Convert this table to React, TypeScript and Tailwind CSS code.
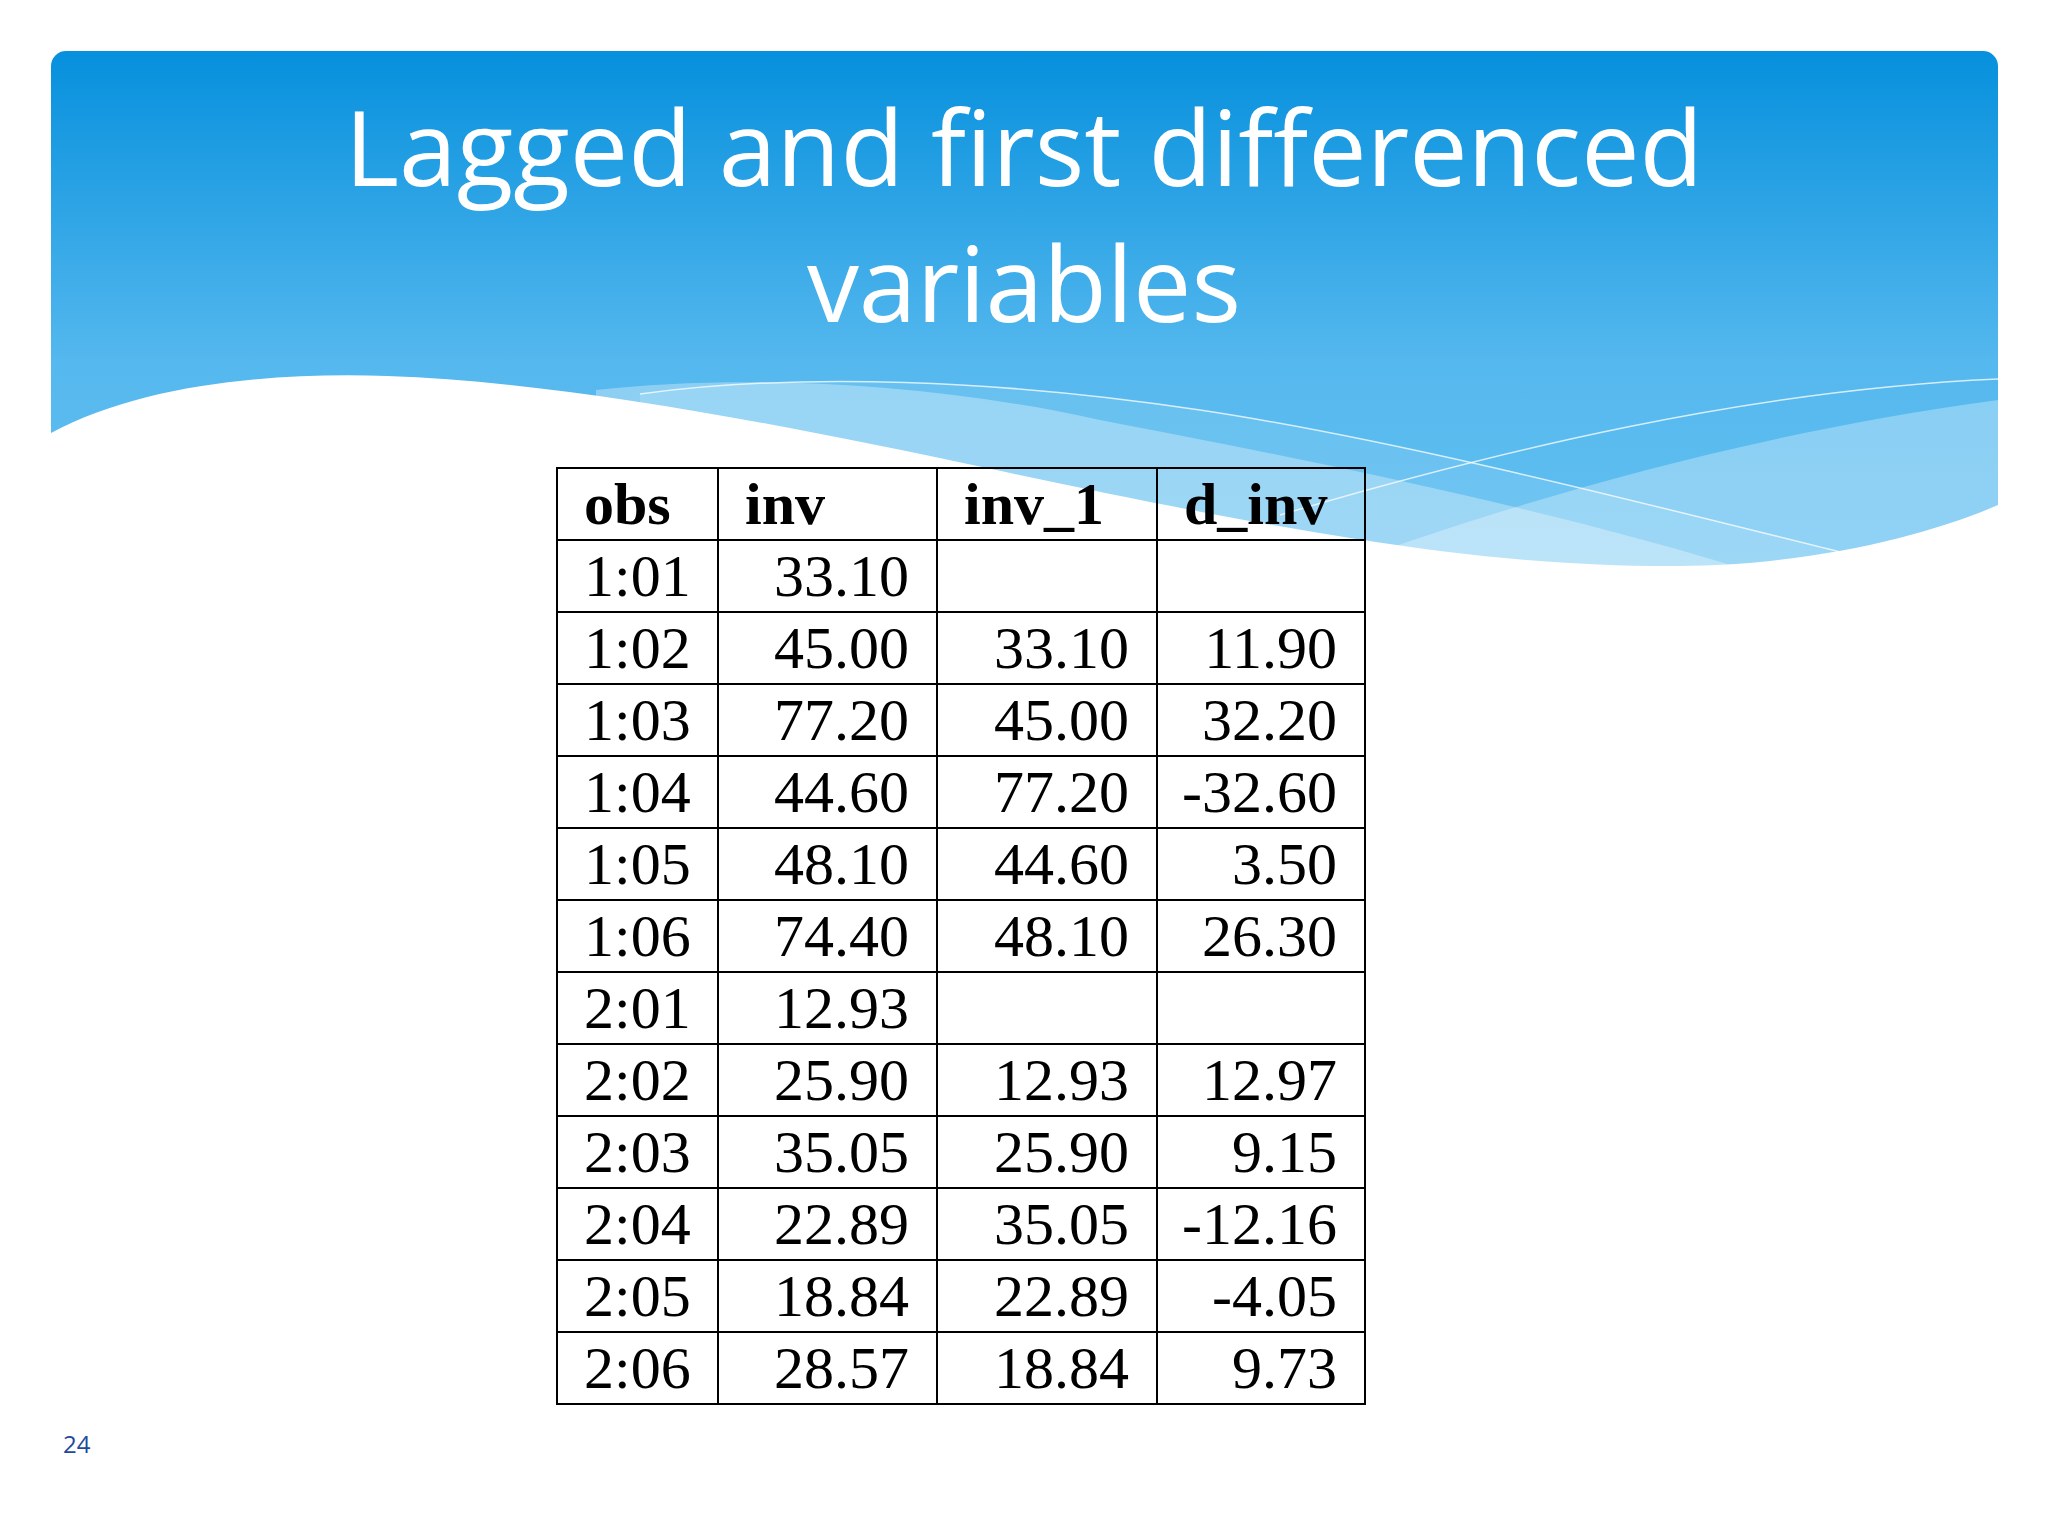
const header = ["obs", "inv", "inv_1", "d_inv"];

const rows: string[][] = [
  ["1:01", "33.10", "", ""],
  ["1:02", "45.00", "33.10", "11.90"],
  ["1:03", "77.20", "45.00", "32.20"],
  ["1:04", "44.60", "77.20", "-32.60"],
  ["1:05", "48.10", "44.60", "3.50"],
  ["1:06", "74.40", "48.10", "26.30"],
  ["2:01", "12.93", "", ""],
  ["2:02", "25.90", "12.93", "12.97"],
  ["2:03", "35.05", "25.90", "9.15"],
  ["2:04", "22.89", "35.05", "-12.16"],
  ["2:05", "18.84", "22.89", "-4.05"],
  ["2:06", "28.57", "18.84", "9.73"],
];

// wave banner drawn behind the slide content
const WaveBanner = () => (
  <svg
    className="absolute left-0 top-0"
    width={2048}
    height={600}
    viewBox="0 0 2048 600"
  >
    <defs>
      <linearGradient id="bannerFill" x1="0" y1="51" x2="0" y2="570" gradientUnits="userSpaceOnUse">
        <stop offset="0" stopColor="#0690dd" />
        <stop offset="0.6" stopColor="#55b8ee" />
        <stop offset="1" stopColor="#62c0f1" />
      </linearGradient>
    </defs>
    <path d="M51,66 A15,15 0 0 1 66,51 H1983 A15,15 0 0 1 1998,66 V600 H51 Z" fill="url(#bannerFill)" />
    {/* faint band under the highlight line */}
    <path
      d="M640,394 C800,372 1000,380 1200,410 S1650,505 1840,552 L1840,600 L640,600 Z"
      fill="#ffffff"
      fillOpacity={0.1}
    />
    {/* descending light band */}
    <path
      d="M596,390 C740,374 930,382 1100,420 C1300,458 1550,508 1760,574 L596,600 Z"
      fill="#ffffff"
      fillOpacity={0.32}
    />
    {/* rising light band */}
    <path
      d="M1300,580 C1450,525 1700,440 1998,400 L1998,600 L1300,600 Z"
      fill="#ffffff"
      fillOpacity={0.3}
    />
    {/* highlight lines */}
    <path
      d="M640,394 C800,372 1000,380 1200,410 S1650,505 1840,552"
      fill="none"
      stroke="#ffffff"
      strokeOpacity={0.75}
      strokeWidth={1.5}
    />
    <path
      d="M1280,515 C1500,450 1750,390 1998,379"
      fill="none"
      stroke="#ffffff"
      strokeOpacity={0.75}
      strokeWidth={1.5}
    />
    {/* white wave */}
    <path
      d="M51,433 C140,385 270,372 387,376 C560,382 760,420 982,467 C1150,503 1300,533 1440,551 C1560,566 1680,570 1760,562 C1860,552 1940,530 1998,505 L1998,600 L51,600 Z"
      fill="#ffffff"
    />
  </svg>
);

export default function App() {
  return (
    <div className="relative w-[2048px] h-[1536px] overflow-hidden bg-white">
      <WaveBanner />

      <div className="relative">
        <h1 className="mx-auto w-[1600px] pt-[78px] text-center font-['Open_Sans',sans-serif] text-[104px] font-normal leading-[136px] text-white">
          Lagged and first differenced variables
        </h1>

        <table className="ml-[556px] mt-[117px] w-[810px] table-fixed border-separate border-spacing-0 border-l-2 border-t-2 border-black font-['Liberation_Serif',serif] text-[60px] leading-[70px] text-black">
          <colgroup>
            <col className="w-[161px]" />
            <col className="w-[219px]" />
            <col className="w-[220px]" />
            <col className="w-[208px]" />
          </colgroup>
          <thead>
            <tr>
              {header.map((h) => (
                <th
                  key={h}
                  className="whitespace-nowrap border-b-2 border-r-2 border-black p-0 pl-[26px] text-left font-bold"
                >
                  {h}
                </th>
              ))}
            </tr>
          </thead>
          <tbody>
            {rows.map((r) => (
              <tr key={r[0]}>
                {r.map((v, i) => (
                  <td
                    key={i}
                    className={
                      i === 0
                        ? "whitespace-nowrap border-b-2 border-r-2 border-black p-0 pl-[26px] text-left"
                        : "whitespace-nowrap border-b-2 border-r-2 border-black p-0 pr-[27px] text-right"
                    }
                  >
                    {v}
                  </td>
                ))}
              </tr>
            ))}
          </tbody>
        </table>

        <div className="ml-[63px] mt-[23px] font-['Open_Sans',sans-serif] text-[24px] leading-[32px] text-[#1e4a9a]">
          24
        </div>
      </div>
    </div>
  );
}
